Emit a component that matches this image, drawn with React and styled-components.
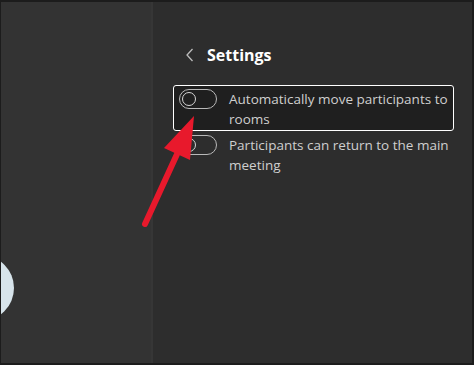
import React from "react";
import styled, { createGlobalStyle } from "styled-components";

const Global = createGlobalStyle`
  html, body { margin: 0; padding: 0; background: #1c1c1c; }
  * { box-sizing: border-box; }
`;

const Frame = styled.div`
  position: relative;
  width: 474px;
  height: 365px;
  display: flex;
  border-style: solid;
  border-color: #1c1c1c;
  border-width: 2px 2px 2px 1px;
  overflow: hidden;
  font-family: "Open Sans", "Noto Sans", sans-serif;
`;

const StagePane = styled.div`
  position: relative;
  width: 152px;
  flex: none;
  background: #333333;
  border-right: 2px solid #363636;
  overflow: hidden;
`;

const Avatar = styled.div`
  position: absolute;
  left: -53px;
  top: 253px;
  width: 66px;
  height: 66px;
  border-radius: 50%;
  background: #d7e4eb;
`;

const SidePane = styled.div`
  flex: 1;
  background: #2d2d2d;
  padding: 42px 0 0 20px;
  display: flex;
  flex-direction: column;
`;

const Header = styled.div`
  display: flex;
  align-items: center;
  gap: 13px;
  height: 22px;
  padding-left: 13px;
  margin-bottom: 19px;
`;

const Title = styled.span`
  color: #ffffff;
  font-weight: 700;
  font-size: 16px;
  line-height: 22px;
`;

const Row = styled.div`
  width: 281px;
  display: flex;
  align-items: flex-start;
  gap: 12px;
  padding: 3px 0 1px 5px;
  border: 1px solid ${(p) => (p.$focused ? "#ffffff" : "transparent")};
  border-radius: 3px;
  background: ${(p) => (p.$focused ? "#1f1f1f" : "transparent")};
`;

const Toggle = styled.div`
  position: relative;
  flex: none;
  width: 38px;
  height: 20px;
  border: 1px solid #b9b9b9;
  border-radius: 10px;
`;

const Knob = styled.div`
  position: absolute;
  left: 2px;
  top: 2px;
  width: 14px;
  height: 14px;
  border-radius: 50%;
  border: 1px solid #d6d6d6;
`;

const Label = styled.span`
  color: #cfcfcf;
  font-size: 13.5px;
  line-height: 20px;
`;

const Overlay = styled.svg`
  position: absolute;
  left: -1px;
  top: -2px;
  pointer-events: none;
`;

function Chevron() {
  return (
    <svg width="8" height="14" viewBox="0 0 8 14">
      <path d="M6.5 1 L1 7 L6.5 13" fill="none" stroke="#bdbdbd" strokeWidth="1.3" />
    </svg>
  );
}

function Switch() {
  return (
    <Toggle>
      <Knob />
    </Toggle>
  );
}

export default function App() {
  return (
    <>
      <Global />
      <Frame>
        <StagePane>
          <Avatar />
        </StagePane>
        <SidePane>
          <Header>
            <Chevron />
            <Title>Settings</Title>
          </Header>
          <Row $focused>
            <Switch />
            <Label>Automatically move participants to rooms</Label>
          </Row>
          <Row>
            <Switch />
            <Label>Participants can return to the main meeting</Label>
          </Row>
        </SidePane>
        <Overlay width="474" height="365" viewBox="0 0 474 365">
          <line x1="145" y1="224" x2="178" y2="152" stroke="#e8192c" strokeWidth="6" strokeLinecap="round" />
          <polygon points="194,116 164,148 190,160" fill="#e8192c" />
        </Overlay>
      </Frame>
    </>
  );
}
